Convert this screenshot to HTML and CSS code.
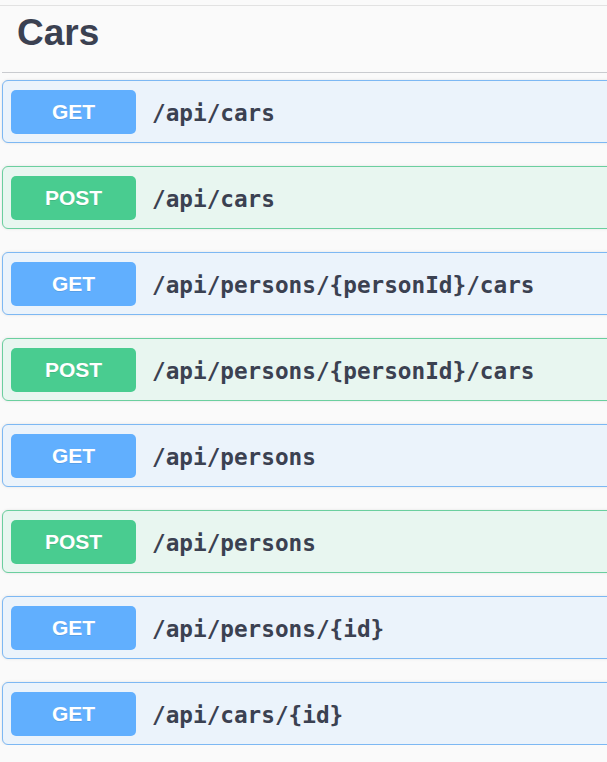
FILE: index.html
```html
<!DOCTYPE html>
<html>
<head>
<meta charset="utf-8">
<link rel="stylesheet" href="styles.css">
</head>
<body>
<div class="tag-section">
  <h3 class="tag-title">Cars</h3>
  <div class="ops">
    <div class="op op-get"><span class="method">GET</span><span class="path">/api/cars</span></div>
    <div class="op op-post"><span class="method">POST</span><span class="path">/api/cars</span></div>
    <div class="op op-get"><span class="method">GET</span><span class="path">/api/persons/{personId}/cars</span></div>
    <div class="op op-post"><span class="method">POST</span><span class="path">/api/persons/{personId}/cars</span></div>
    <div class="op op-get"><span class="method">GET</span><span class="path">/api/persons</span></div>
    <div class="op op-post"><span class="method">POST</span><span class="path">/api/persons</span></div>
    <div class="op op-get"><span class="method">GET</span><span class="path">/api/persons/{id}</span></div>
    <div class="op op-get"><span class="method">GET</span><span class="path">/api/cars/{id}</span></div>
  </div>
</div>
</body>
</html>
```
FILE: styles.css
```css
html, body {
  margin: 0;
  padding: 0;
  background: #fafafa;
  overflow: hidden;
  font-family: "Liberation Sans", Arial, sans-serif;
}

.tag-section {
  margin-top: 5px;
  border-top: 1px solid #e2e2e2;
}

.tag-title {
  margin: 0 0 0 2px;
  padding: 8px 0 21px 15px;
  font-size: 37px;
  line-height: 37px;
  font-weight: 700;
  color: #3b4151;
  border-bottom: 1px solid #c9cbcf;
}

.ops {
  display: flex;
  flex-direction: column;
  gap: 23px;
  padding-top: 7px;
  margin: 0 -12px 0 2px;
}

.op {
  display: flex;
  align-items: center;
  gap: 16px;
  height: 61px;
  padding: 0 8px;
  border: 1px solid;
  border-radius: 6px;
  box-shadow: 0 0 3px rgba(0, 0, 0, 0.1);
}

.op-get {
  background: #ebf3fb;
  border-color: #7db8f3;
}

.op-post {
  background: #e8f6f0;
  border-color: #6bcf9f;
}

.method {
  width: 125px;
  height: 44px;
  border-radius: 5px;
  display: flex;
  align-items: center;
  justify-content: center;
  color: #fff;
  font-weight: 700;
  font-size: 21px;
  text-shadow: 0 1px 0 rgba(0, 0, 0, 0.1);
}

.op-get .method { background: #61affe; }
.op-post .method { background: #49cc90; }

.path {
  font-family: "DejaVu Sans Mono", "Liberation Mono", monospace;
  font-weight: 700;
  font-size: 22.7px;
  color: #3b4151;
  padding-top: 2px;
}
```
